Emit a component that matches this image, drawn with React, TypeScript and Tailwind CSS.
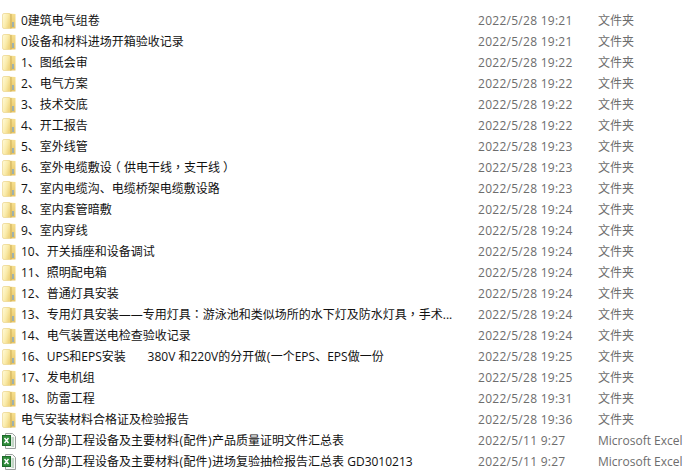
// 파일 목록 뷰
const FOLDER = '文件夹'
const EXCEL = 'Microsoft Excel'

const ROWS: { name: string; date: string; type: string }[] = [
  { name: '0建筑电气组卷', date: '2022/5/28 19:21', type: FOLDER },
  { name: '0设备和材料进场开箱验收记录', date: '2022/5/28 19:21', type: FOLDER },
  { name: '1、图纸会审', date: '2022/5/28 19:22', type: FOLDER },
  { name: '2、电气方案', date: '2022/5/28 19:22', type: FOLDER },
  { name: '3、技术交底', date: '2022/5/28 19:22', type: FOLDER },
  { name: '4、开工报告', date: '2022/5/28 19:22', type: FOLDER },
  { name: '5、室外线管', date: '2022/5/28 19:23', type: FOLDER },
  { name: '6、室外电缆敷设（供电干线，支干线）', date: '2022/5/28 19:23', type: FOLDER },
  { name: '7、室内电缆沟、电缆桥架电缆敷设路', date: '2022/5/28 19:23', type: FOLDER },
  { name: '8、室内套管暗敷', date: '2022/5/28 19:24', type: FOLDER },
  { name: '9、室内穿线', date: '2022/5/28 19:24', type: FOLDER },
  { name: '10、开关插座和设备调试', date: '2022/5/28 19:24', type: FOLDER },
  { name: '11、照明配电箱', date: '2022/5/28 19:24', type: FOLDER },
  { name: '12、普通灯具安装', date: '2022/5/28 19:24', type: FOLDER },
  { name: '13、专用灯具安装——专用灯具：游泳池和类似场所的水下灯及防水灯具，手术...', date: '2022/5/28 19:24', type: FOLDER },
  { name: '14、电气装置送电检查验收记录', date: '2022/5/28 19:24', type: FOLDER },
  { name: '16、UPS和EPS安装\u00a0\u00a0\u00a0\u00a0\u00a0\u00a0\u00a0380V 和220V的分开做(一个EPS、EPS做一份', date: '2022/5/28 19:25', type: FOLDER },
  { name: '17、发电机组', date: '2022/5/28 19:25', type: FOLDER },
  { name: '18、防雷工程', date: '2022/5/28 19:31', type: FOLDER },
  { name: '电气安装材料合格证及检验报告', date: '2022/5/28 19:36', type: FOLDER },
  { name: '14 (分部)工程设备及主要材料(配件)产品质量证明文件汇总表', date: '2022/5/11 9:27', type: EXCEL },
  { name: '16 (分部)工程设备及主要材料(配件)进场复验抽检报告汇总表 GD3010213', date: '2022/5/11 9:27', type: EXCEL },
]

// 전각 문장부호는 가운데 정렬 글꼴로, 괄호는 살짝 넓게
const renderName = (name: string) =>
  name.split(/([（），：]|[()])/).map((part, i) => {
    if (part === '（' || part === '）') {
      return (
        <span key={i} className="inline-block w-[12px] text-center [font-feature-settings:'halt']">
          {part}
        </span>
      )
    }
    if (part === '，' || part === '：') {
      return (
        <span key={i} className="font-['Noto_Sans_CJK_TC']">
          {part}
        </span>
      )
    }
    if (part === '(' || part === ')') {
      return (
        <span key={i} className="px-[0.5px]">
          {part}
        </span>
      )
    }
    return part
  })

const FolderIcon = () => (
  <svg width="14" height="16" viewBox="0 0 14 16" className="shrink-0">
    <defs>
      <linearGradient id="folderLeaf" x1="0" y1="0" x2="1" y2="0.5">
        <stop offset="0" stopColor="#fffbdc" />
        <stop offset="0.6" stopColor="#faeba9" />
        <stop offset="1" stopColor="#efd47f" />
      </linearGradient>
      <linearGradient id="folderBack" x1="0" y1="0" x2="0" y2="1">
        <stop offset="0" stopColor="#f6df8f" />
        <stop offset="1" stopColor="#e6c466" />
      </linearGradient>
    </defs>
    <path d="M1 1 L6 0.5 L13.5 1 V15.5 H8 V1 Z" fill="url(#folderBack)" />
    <path d="M0.5 2 Q0.5 0.5 2 0.5 L7 0.5 Q8.5 0.5 8.5 2 V15.5 H2 Q0.5 15.5 0.5 14 Z" fill="url(#folderLeaf)" stroke="#ead07f" strokeWidth="0.6" />
    <path d="M9 1 V15.5" stroke="#c4a44c" strokeWidth="0.8" />
    <path d="M11 9 V14" stroke="#7ea6c6" strokeWidth="1.4" />
  </svg>
)

const ExcelIcon = () => (
  <svg width="14" height="16" viewBox="0 0 14 16" className="shrink-0">
    <path d="M3.5 0.5 H10.5 L13.5 3.5 V15.5 H3.5 Z" fill="#f7f8f7" stroke="#9ba09e" />
    <path d="M9.5 5 H12 M9.5 7 H12 M9.5 9 H12 M9.5 11 H12 M9.5 13 H12" stroke="#8db494" />
    <rect x="0.5" y="2.5" width="8" height="10" fill="#2e8b3a" stroke="#1d6a2a" />
    <path d="M2.5 5 L6.5 10 M6.5 5 L2.5 10" stroke="#ffffff" strokeWidth="1.4" />
  </svg>
)

export default function App() {
  return (
    <div className="flex h-[471px] w-[691px] flex-col overflow-hidden bg-white pt-[10px] font-['Open_Sans','Noto_Sans_CJK_SC',sans-serif] text-xs">
      {ROWS.map((row) => (
        <div key={row.name} className="flex h-[21px] shrink-0 items-center whitespace-nowrap pl-[2px]">
          {row.type === FOLDER ? <FolderIcon /> : <ExcelIcon />}
          <span className="ml-[5px] w-[457px] shrink-0 text-[#111111]">{renderName(row.name)}</span>
          <span className="w-[120px] shrink-0 tracking-[0.27px] text-[#6d6d6d]">{row.date}</span>
          <span className="text-[#6d6d6d]">{row.type}</span>
        </div>
      ))}
    </div>
  )
}
